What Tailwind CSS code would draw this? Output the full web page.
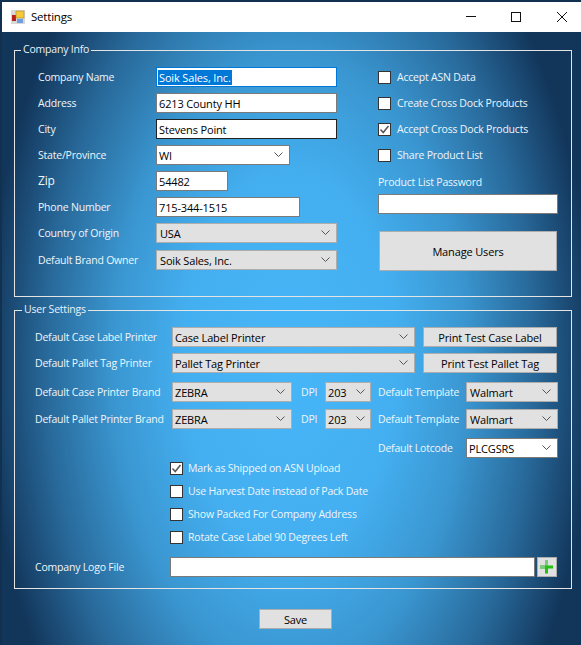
<!DOCTYPE html>
<html lang="en">
<head>
    <meta charset="UTF-8">
    <title>Settings</title>
    <script src="https://cdn.jsdelivr.net/npm/@tailwindcss/browser@4"></script>
</head>
<body class="bg-[#12304f] font-['Open_Sans',sans-serif] text-[10.5px] tracking-[-0.2px] leading-none whitespace-nowrap">
    <div class="w-[581px] h-[645px] overflow-hidden pt-[2px] pl-[2px] flex flex-col">
        <!-- title bar -->
        <div class="h-[30px] bg-white flex items-center text-black shrink-0">
            <svg class="ml-[9px] w-[14px] h-[14px] shrink-0" viewBox="0 0 14 14">
                <rect x="0" y="0" width="14" height="14" fill="#d8d8d8"/>
                <rect x="1" y="5" width="4" height="6" fill="#b8201c"/>
                <rect x="5" y="1" width="8" height="7" fill="#f5c93c" stroke="#b08a20" stroke-width="0.6"/>
                <rect x="6" y="9" width="6" height="4" fill="#6f9fe0"/>
            </svg>
            <span class="ml-[6px] text-[11.5px] flex-1">Settings</span>
            <svg class="w-[10px] h-[2px] shrink-0" viewBox="0 0 10 2"><rect width="10" height="1" fill="#111"/></svg>
            <svg class="ml-[35px] w-[10px] h-[10px] shrink-0" viewBox="0 0 10 10"><rect x="0.5" y="0.5" width="9" height="9" fill="none" stroke="#111"/></svg>
            <svg class="ml-[36px] mr-[14px] w-[10px] h-[10px] shrink-0" viewBox="0 0 10 10"><path d="M0 0L10 10M10 0L0 10" stroke="#111" fill="none"/></svg>
        </div>

        <!-- form -->
        <div class="flex-1 text-white pl-[12px] bg-[radial-gradient(ellipse_305px_530px_at_288px_330px,#46b6f8_0%,#44aff0_35%,#3a96d0_58%,#28699a_80%,#12355a_100%)]">
            <fieldset class="w-[558px] h-[254px] mt-[11px] border border-[#e4e4e4] pl-[23px]">
                <legend class="-ml-[17px] px-[2px] pt-[1px] h-[14px] text-[#e8f2fa]">Company Info</legend>
                <div class="flex">
                    <div class="w-[118px] pt-[10px] flex flex-col gap-[6px] text-[#eef6fc]">
                        <div class="h-[20px] flex items-center">Company Name</div>
                        <div class="h-[20px] flex items-center">Address</div>
                        <div class="h-[20px] flex items-center">City</div>
                        <div class="h-[20px] flex items-center">State/Province</div>
                        <div class="h-[20px] flex items-center text-[12px]">Zip</div>
                        <div class="h-[20px] flex items-center">Phone Number</div>
                        <div class="h-[20px] flex items-center">Country of Origin</div>
                        <div class="mt-[1px] h-[20px] flex items-center">Default Brand Owner</div>
                    </div>
                    <div class="w-[181px] pt-[10px] flex flex-col gap-[6px] text-black text-[11px] tracking-[-0.15px]">
                        <div class="h-[20px] bg-white border border-[#0078d7] flex items-center pl-[1px]"><span class="bg-[#0078d7] text-white px-[1px] py-[2px]">Soik Sales, Inc.</span></div>
                        <div class="h-[20px] bg-white border border-[#7a7a7a] flex items-center pl-[2px]">6213 County HH</div>
                        <div class="h-[20px] bg-white border border-[#222] flex items-center pl-[2px]">Stevens Point</div>
                        <div class="w-[134px] h-[20px] bg-white border border-[#7a7a7a] flex items-center justify-between pl-[2px] pr-[6px]">WI
                            <svg class="w-[9px] h-[6px]" viewBox="0 0 9 6"><path d="M0.5 0.5L4.5 4.5L8.5 0.5" fill="none" stroke="#555"/></svg>
                        </div>
                        <div class="w-[72px] h-[20px] bg-white border border-[#7a7a7a] flex items-center pl-[2px]">54482</div>
                        <div class="w-[144px] h-[20px] bg-white border border-[#7a7a7a] flex items-center pl-[2px]">715-344-1515</div>
                        <div class="h-[20px] bg-[#e1e1e1] border border-[#adadad] flex items-center justify-between pl-[3px] pr-[6px]">USA
                            <svg class="w-[9px] h-[6px]" viewBox="0 0 9 6"><path d="M0.5 0.5L4.5 4.5L8.5 0.5" fill="none" stroke="#555"/></svg>
                        </div>
                        <div class="mt-[1px] h-[20px] bg-[#e1e1e1] border border-[#adadad] flex items-center justify-between pl-[3px] pr-[6px]">Soik Sales, Inc.
                            <svg class="w-[9px] h-[6px]" viewBox="0 0 9 6"><path d="M0.5 0.5L4.5 4.5L8.5 0.5" fill="none" stroke="#555"/></svg>
                        </div>
                    </div>
                    <div class="ml-[41px] w-[180px] pt-[10px] flex flex-col text-[#eef6fc]">
                        <div class="h-[20px] flex items-center gap-[6px]"><span class="w-[13px] h-[13px] bg-white border border-[#333]"></span>Accept ASN Data</div>
                        <div class="mt-[6px] h-[20px] flex items-center gap-[6px]"><span class="w-[13px] h-[13px] bg-white border border-[#333]"></span>Create Cross Dock Products</div>
                        <div class="mt-[6px] h-[20px] flex items-center gap-[6px]">
                            <span class="w-[13px] h-[13px] bg-white border border-[#333] flex items-center justify-center"><svg class="w-[11px] h-[11px]" viewBox="0 0 11 11"><path d="M1.5 5.5L4.2 8.5L9.5 2" fill="none" stroke="#555" stroke-width="1.5"/></svg></span>Accept Cross Dock Products
                        </div>
                        <div class="mt-[6px] h-[20px] flex items-center gap-[6px]"><span class="w-[13px] h-[13px] bg-white border border-[#333]"></span>Share Product List</div>
                        <div class="mt-[7px] h-[20px] flex items-center">Product List Password</div>
                        <div class="mt-[2px] h-[20px] bg-white border border-[#7a7a7a]"></div>
                        <div class="mt-[17px] ml-[1px] w-[178px] h-[40px] bg-[#e1e1e1] border border-[#adadad] flex items-center justify-center text-black text-[11px] tracking-[-0.15px]">Manage Users</div>
                    </div>
                </div>
            </fieldset>

            <fieldset class="w-[558px] h-[286px] mt-[6px] border border-[#e4e4e4] pl-[20px] text-[#eef6fc]">
                <legend class="-ml-[13px] px-[2px] pt-[1px] h-[14px] text-[#e8f2fa]">User Settings</legend>
                <div class="mt-[10px] h-[20px] flex items-center">
                    <div class="w-[137px]">Default Case Label Printer</div>
                    <div class="w-[243px] h-[20px] bg-[#e1e1e1] border border-[#adadad] flex items-center justify-between pl-[2px] pr-[6px] text-black text-[11px] tracking-[-0.15px]">Case Label Printer
                        <svg class="w-[9px] h-[6px]" viewBox="0 0 9 6"><path d="M0.5 0.5L4.5 4.5L8.5 0.5" fill="none" stroke="#555"/></svg>
                    </div>
                    <div class="ml-[8px] w-[134px] h-[20px] bg-[#e1e1e1] border border-[#adadad] flex items-center justify-center text-black text-[11px] tracking-[-0.15px]">Print Test Case Label</div>
                </div>
                <div class="mt-[6px] h-[20px] flex items-center">
                    <div class="w-[137px]">Default Pallet Tag Printer</div>
                    <div class="w-[243px] h-[20px] bg-[#e1e1e1] border border-[#adadad] flex items-center justify-between pl-[2px] pr-[6px] text-black text-[11px] tracking-[-0.15px]">Pallet Tag Printer
                        <svg class="w-[9px] h-[6px]" viewBox="0 0 9 6"><path d="M0.5 0.5L4.5 4.5L8.5 0.5" fill="none" stroke="#555"/></svg>
                    </div>
                    <div class="ml-[8px] w-[134px] h-[20px] bg-[#e1e1e1] border border-[#adadad] flex items-center justify-center text-black text-[11px] tracking-[-0.15px]">Print Test Pallet Tag</div>
                </div>
                <div class="mt-[9px] h-[20px] flex items-center">
                    <div class="w-[137px]">Default Case Printer Brand</div>
                    <div class="w-[120px] h-[20px] bg-[#e1e1e1] border border-[#adadad] flex items-center justify-between pl-[2px] pr-[6px] text-black text-[11px] tracking-[-0.15px]">ZEBRA
                        <svg class="w-[9px] h-[6px]" viewBox="0 0 9 6"><path d="M0.5 0.5L4.5 4.5L8.5 0.5" fill="none" stroke="#555"/></svg>
                    </div>
                    <div class="ml-[9px] w-[24px]">DPI</div>
                    <div class="w-[46px] h-[20px] bg-[#e1e1e1] border border-[#adadad] flex items-center justify-between pl-[2px] pr-[5px] text-black text-[11px] tracking-[-0.15px]">203
                        <svg class="w-[9px] h-[6px]" viewBox="0 0 9 6"><path d="M0.5 0.5L4.5 4.5L8.5 0.5" fill="none" stroke="#555"/></svg>
                    </div>
                    <div class="ml-[7px] w-[88px]">Default Template</div>
                    <div class="w-[92px] h-[20px] bg-[#e1e1e1] border border-[#adadad] flex items-center justify-between pl-[3px] pr-[6px] text-black text-[11px] tracking-[-0.15px]">Walmart
                        <svg class="w-[9px] h-[6px]" viewBox="0 0 9 6"><path d="M0.5 0.5L4.5 4.5L8.5 0.5" fill="none" stroke="#555"/></svg>
                    </div>
                </div>
                <div class="mt-[7px] h-[20px] flex items-center">
                    <div class="w-[137px]">Default Pallet Printer Brand</div>
                    <div class="w-[120px] h-[20px] bg-[#e1e1e1] border border-[#adadad] flex items-center justify-between pl-[2px] pr-[6px] text-black text-[11px] tracking-[-0.15px]">ZEBRA
                        <svg class="w-[9px] h-[6px]" viewBox="0 0 9 6"><path d="M0.5 0.5L4.5 4.5L8.5 0.5" fill="none" stroke="#555"/></svg>
                    </div>
                    <div class="ml-[9px] w-[24px]">DPI</div>
                    <div class="w-[46px] h-[20px] bg-[#e1e1e1] border border-[#adadad] flex items-center justify-between pl-[2px] pr-[5px] text-black text-[11px] tracking-[-0.15px]">203
                        <svg class="w-[9px] h-[6px]" viewBox="0 0 9 6"><path d="M0.5 0.5L4.5 4.5L8.5 0.5" fill="none" stroke="#555"/></svg>
                    </div>
                    <div class="ml-[7px] w-[88px]">Default Template</div>
                    <div class="w-[92px] h-[20px] bg-[#e1e1e1] border border-[#adadad] flex items-center justify-between pl-[3px] pr-[6px] text-black text-[11px] tracking-[-0.15px]">Walmart
                        <svg class="w-[9px] h-[6px]" viewBox="0 0 9 6"><path d="M0.5 0.5L4.5 4.5L8.5 0.5" fill="none" stroke="#555"/></svg>
                    </div>
                </div>
                <div class="mt-[9px] h-[20px] flex items-center pl-[343px]">
                    <div class="w-[88px]">Default Lotcode</div>
                    <div class="w-[92px] h-[20px] bg-white border border-[#7a7a7a] flex items-center justify-between pl-[2px] pr-[6px] text-black text-[11px] tracking-[-0.15px]">PLCGSRS
                        <svg class="w-[9px] h-[6px]" viewBox="0 0 9 6"><path d="M0.5 0.5L4.5 4.5L8.5 0.5" fill="none" stroke="#555"/></svg>
                    </div>
                </div>
                <div class="pl-[135px] flex flex-col gap-[3px]">
                    <div class="h-[20px] flex items-center gap-[5px]">
                        <span class="w-[13px] h-[13px] bg-white border border-[#333] flex items-center justify-center"><svg class="w-[11px] h-[11px]" viewBox="0 0 11 11"><path d="M1.5 5.5L4.2 8.5L9.5 2" fill="none" stroke="#555" stroke-width="1.5"/></svg></span>Mark as Shipped on ASN Upload
                    </div>
                    <div class="h-[20px] flex items-center gap-[5px]"><span class="w-[13px] h-[13px] bg-white border border-[#333]"></span>Use Harvest Date instead of Pack Date</div>
                    <div class="h-[20px] flex items-center gap-[5px]"><span class="w-[13px] h-[13px] bg-white border border-[#333]"></span>Show Packed For Company Address</div>
                    <div class="h-[20px] flex items-center gap-[5px]"><span class="w-[13px] h-[13px] bg-white border border-[#333]"></span>Rotate Case Label 90 Degrees Left</div>
                </div>
                <div class="mt-[10px] h-[20px] flex items-center">
                    <div class="w-[135px]">Company Logo File</div>
                    <div class="w-[365px] h-[20px] bg-white border border-[#7a7a7a]"></div>
                    <div class="ml-[2px] w-[20px] h-[20px] bg-[#e1e1e1] border border-[#adadad] flex items-center justify-center">
                        <svg class="w-[14px] h-[14px]" viewBox="0 0 14 14"><path d="M5 0.5h3v5h5v3h-5v5h-3v-5h-5v-3h5z" fill="#22c010"/><path d="M5 0.5h3v5h-3zM0 5.5h5v3h-5z" fill="#7cc87c"/></svg>
                    </div>
                </div>
            </fieldset>

            <div class="mt-[20px] ml-[245px] w-[73px] h-[20px] bg-[#e1e1e1] border border-[#adadad] flex items-center justify-center text-black text-[11px] tracking-[-0.15px]">Save</div>
        </div>
    </div>
</body>
</html>
